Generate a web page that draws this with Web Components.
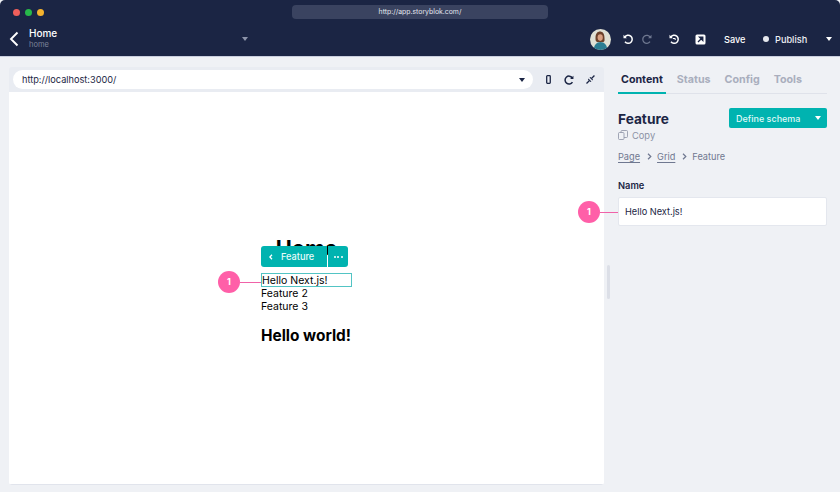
<!DOCTYPE html>
<html><head><meta charset="utf-8">
<style>
html,body{margin:0;padding:0;width:840px;height:492px;overflow:hidden;background:#eff1f5;font-family:Inter,"Liberation Sans",sans-serif}
sb-app{display:block;width:840px;height:492px}
</style></head><body>
<sb-app></sb-app>
<script>
function def(name,css,html){
  customElements.define(name,class extends HTMLElement{
    constructor(){super();const r=this.attachShadow({mode:'open'});r.innerHTML='<style>'+css+'</style>'+html;}
  });
}
def('sb-titlebar',`
:host{display:flex;align-items:center;height:24px;position:relative;padding-left:13px;box-sizing:border-box}
.d{width:7px;height:7px;border-radius:50%;margin-right:5px}
.u{position:absolute;left:292px;top:5px;width:256px;height:14px;border-radius:4px;background:#3a4360;color:#e3e6ee;font-size:6.900px;line-height:14px;text-align:center}
`,`<span class="d" style="background:#ee5f5b"></span><span class="d" style="background:#27b84a"></span><span class="d" style="background:#f5b32e"></span><div class="u">http://app.storyblok.com/</div>`);

def('sb-topbar',`
:host{display:flex;align-items:center;height:32px;color:#fff;box-sizing:border-box;padding-bottom:2px}
.back{margin-left:9px;width:10px;height:16px;display:block}
.t{margin-left:10px;width:210px}
.h{font-size:10px;line-height:13px;font-weight:500;margin-top:-1px}
.s{font-size:7.5px;line-height:10px;color:#7d849b}
.c{margin-left:3px;width:0;height:0;border-left:3.5px solid transparent;border-right:3.5px solid transparent;border-top:4px solid #8d94aa}
.sp{flex:1}
.av{width:21px;height:21px;display:block;margin-right:11px}
svg.i{display:block}
.save{font-size:9.2px;font-weight:500;margin-left:18px;width:21px;white-space:nowrap}
.dot{width:6px;height:6px;border-radius:50%;background:#e6e8ee;margin-left:18px}
.pub{font-size:9.2px;font-weight:500;margin-left:6px;color:#eef0f5;width:32px;white-space:nowrap}
.car{width:0;height:0;border-left:3.5px solid transparent;border-right:3.5px solid transparent;border-top:4px solid #fff;margin-left:19px;margin-right:8px}
`,`<svg class="back" viewBox="0 0 10 16"><path d="M8.5 1.5 2 8l6.5 6.5" fill="none" stroke="#fff" stroke-width="1.9"/></svg>
<div class="t"><div class="h">Home</div><div class="s">home</div></div>
<span class="c"></span><span class="sp"></span>
<svg class="av" viewBox="0 0 21 21"><defs><clipPath id="ac"><circle cx="10.5" cy="10.5" r="10.5"/></clipPath></defs><g clip-path="url(#ac)"><rect width="21" height="21" fill="#dfe0d4"/><path d="M5.500 9c0-4.500 2-6.500 4.500-6.500S14.500 4.500 14.500 9c0 2 .5 3-1 4H7c-1.500-1-1.500-2-1.500-4z" fill="#6b4029"/><ellipse cx="10.200" cy="8.600" rx="2.600" ry="3.300" fill="#d9a183"/><path d="M3.500 21c.5-5 3-8 7-8s6.500 3 7 8z" fill="#2b7d92"/></g></svg>
<svg class="i" width="12" height="12" viewBox="0 0 12 12"><path d="M2.800 4.200A4 4 0 1 1 3 8.700" fill="none" stroke="#fff" stroke-width="1.500"/><path d="M1.500 1.800v3.400h3.400z" fill="#fff"/></svg>
<svg class="i" style="margin-left:7px" width="12" height="12" viewBox="0 0 12 12"><path d="M9.200 4.200A4 4 0 1 0 9 8.700" fill="none" stroke="#6f7890" stroke-width="1.300"/><path d="M10.500 1.800v3.400H7.100z" fill="#6f7890"/></svg>
<svg class="i" style="margin-left:15px" width="12" height="12" viewBox="0 0 12 12"><path d="M2.800 4.200A4 4 0 1 1 3 8.700" fill="none" stroke="#fff" stroke-width="1.500"/><path d="M1.500 1.800v3.400h3.400z" fill="#fff"/><path d="M5 5.500h2.200v1.500" fill="none" stroke="#fff" stroke-width="1"/></svg>
<svg class="i" style="margin-left:15px" width="11" height="11" viewBox="0 0 11 11"><rect x=".5" y=".5" width="10" height="10" rx="1.500" fill="#fff"/><path d="M3 8l4-4M4.500 3.200h3.300v3.300z" stroke="#1b2544" stroke-width="1.300" fill="#1b2544"/></svg>
<span class="save">Save</span><span class="dot"></span><span class="pub">Publish</span><span class="car"></span>`);

def('sb-header',`:host{display:block;height:56px;background:#1b2544;border-bottom:1px solid #c9cede;border-radius:5px 5px 0 0}`,`<slot></slot>`);

def('sb-urlbar',`
:host{display:flex;align-items:center;height:25px;background:#e9ecf2;padding:0 9px 0 4px;box-sizing:border-box;flex:none}
.u{width:523px;height:19px;border-radius:10px;background:#fff;display:flex;align-items:center;padding:0 8px 0 9px;box-sizing:border-box;font-size:9.2px;color:#1b2544;justify-content:space-between}
.car{width:0;height:0;border-left:3.500px solid transparent;border-right:3.500px solid transparent;border-top:4px solid #1b2544}
svg{display:block}
`,`<div class="u"><span>http://localhost:3000/</span><span class="car"></span></div>
<svg style="margin-left:13px" width="5" height="9" viewBox="0 0 5 9"><rect x=".7" y=".7" width="3.600" height="7.600" rx=".7" fill="none" stroke="#1b2544" stroke-width="1.300"/></svg>
<svg style="margin-left:13px" width="10" height="10" viewBox="0 0 10 10"><path d="M8.300 2.700A4 4 0 1 0 8.500 7.200" fill="none" stroke="#1b2544" stroke-width="1.500"/><path d="M9.500 .6v3.400H6.100z" fill="#1b2544"/></svg>
<svg style="margin-left:12px" width="9" height="9" viewBox="0 0 9 9"><path d="M.5 8.500 3.500 5.500M8.500 .5l-3 3" stroke="#1b2544" stroke-width="1.300"/><path d="M2.500 3.500l3 3-1 .5-2.500-2.500zM3.500 2.500h0l3 3 .5-1L4.500 2z" fill="#1b2544"/></svg>`);

def('sb-badge',`
:host{position:absolute;display:flex;align-items:center}
.b{width:22px;height:22px;border-radius:50%;background:#ff5fa8;color:#fff;font-size:9px;font-weight:700;text-align:center;line-height:22px;flex:none}
.l{height:1px;background:#f062a8;flex:none;width:var(--len,20px)}
`,`<div class="b">1</div><div class="l"></div>`);

def('sb-toolbar',`
:host{position:absolute;left:0;top:-27px;display:flex;height:21px;color:#fff}
.a{display:flex;align-items:center;background:#00b3b0;width:66px;border-radius:3px 0 0 3px;box-sizing:border-box;padding-left:8px;font-size:9.2px;font-weight:500;color:#e8fbfa}
.a svg{margin-right:8px;display:block}
.b{display:flex;align-items:center;justify-content:center;gap:1.500px;background:#00b3b0;width:20px;margin-left:1px;border-radius:0 3px 3px 0}
.b s{width:2px;height:2px;border-radius:50%;background:#fff}
`,`<div class="a"><svg width="4" height="6" viewBox="0 0 4 6"><path d="M3 .8.9 3 3 5.200" fill="none" stroke="#fff" stroke-width="1.300"/></svg>Feature</div><div class="b"><s></s><s></s><s></s></div>`);

def('sb-preview',`
:host{display:block;flex:1;background:#fff;position:relative;overflow:hidden;box-shadow:inset 0 -1px 0 #e1e4ec}
.col{position:absolute;left:252px;top:143px;width:91px;color:#000}
h1{font-size:21.500px;line-height:26px;margin:0;font-weight:700;text-align:center;white-space:nowrap}
.w{position:relative;margin-top:12px}
.row{font-size:10.500px;line-height:13px;white-space:nowrap;color:#000}
.sel{border:1px solid #52c4c4;height:14px;box-sizing:border-box;margin:0}
h2{font-size:15.400px;line-height:20px;margin:13px 0 0;font-weight:700;white-space:nowrap}
sb-badge{left:-43px;top:-2px;--len:21px}
`,`<div class="col"><h1>Home</h1><div class="w"><sb-toolbar></sb-toolbar><sb-badge></sb-badge>
<div class="row sel">Hello Next.js!</div><div class="row">Feature 2</div><div class="row">Feature 3</div></div><h2>Hello world!</h2></div>`);

def('sb-card',`:host{display:flex;flex-direction:column;width:595px;height:418px;border-radius:3px;overflow:hidden;margin:10px 0 0 9px;flex:none}`,`<slot></slot>`);

def('sb-tabs',`
:host{display:flex;height:22px;border-bottom:1px solid #dfe2ea;font-size:10.700px;font-weight:700;color:#a9aebd;box-sizing:border-box;width:209px;margin-top:15px;padding-left:3px;gap:14px}
.t{height:22px;box-sizing:border-box;line-height:15px;white-space:nowrap}
.on{color:#1b2544;position:relative}
.on::after{content:"";position:absolute;left:-3px;right:-3px;bottom:0;height:2px;background:#00b3b0}
`,`<div class="t on">Content</div><div class="t">Status</div><div class="t">Config</div><div class="t">Tools</div>`);

def('sb-panel',`
:host{display:block;width:209px;margin-left:14px;flex:none;color:#1b2544;position:relative}
.head{display:flex;justify-content:space-between;margin-top:14px;height:20px}
.ti{font-size:13.700px;font-weight:700;line-height:22px}
.btn{display:flex;height:20px;background:#00b3b0;border-radius:2px;width:98px;color:#dff8f6;font-size:9px;font-weight:500;align-items:center;box-sizing:border-box;padding-left:7px;position:relative}
.btn i{position:absolute;right:6px;top:8px;border-left:3.500px solid transparent;border-right:3.500px solid transparent;border-top:4px solid #fff}
.copy{display:flex;align-items:center;gap:4px;font-size:9.300px;color:#8c92a5;margin-top:0;height:14px}
.crumb{display:flex;align-items:center;font-size:9.200px;color:#6f7890;margin-top:7px;height:14px}
.crumb u{text-underline-offset:2px}
.crumb b{width:6px;margin:0 5px 0 6px;display:flex;justify-content:center}
label{display:block;font-size:9.300px;font-weight:600;margin-top:16px;line-height:14px}
.inp{background:#fff;height:29px;border:1px solid #e4e7ee;border-radius:2px;box-sizing:border-box;margin-top:4px;font-size:9.200px;line-height:27px;padding-left:6px;color:#1b2544}
sb-badge{left:-40px;top:4px;--len:18px}
.fld{position:relative}
`,`<sb-tabs></sb-tabs>
<div class="head"><div class="ti">Feature</div><div class="btn">Define schema<i></i></div></div>
<div class="copy"><svg width="10" height="10" viewBox="0 0 10 10"><rect x=".5" y="2.500" width="5.500" height="7" rx="1" fill="none" stroke="#8c92a5" stroke-width=".8"/><path d="M3 2.500V1.500a1 1 0 0 1 1-1h4.500a1 1 0 0 1 1 1v5a1 1 0 0 1-1 1H6" fill="none" stroke="#8c92a5" stroke-width=".8"/></svg>Copy</div>
<div class="crumb"><u>Page</u><b><svg width="5" height="7" viewBox="0 0 5 7"><path d="M1 .8 3.800 3.500 1 6.200" fill="none" stroke="#6f7890" stroke-width="1.200"/></svg></b><u>Grid</u><b><svg width="5" height="7" viewBox="0 0 5 7"><path d="M1 .8 3.800 3.500 1 6.200" fill="none" stroke="#6f7890" stroke-width="1.200"/></svg></b><span>Feature</span></div>
<label>Name</label>
<div class="fld"><sb-badge></sb-badge><div class="inp">Hello Next.js!</div></div>`);

def('sb-app',`
:host{display:block;width:840px;height:492px;background:#eff1f5;position:relative}
.main{display:flex}
.grip{position:absolute;left:607px;top:265px;width:3px;height:34px;border-radius:2px;background:#dcdfe7}
`,`<sb-header><sb-titlebar></sb-titlebar><sb-topbar></sb-topbar></sb-header>
<div class="main"><sb-card><sb-urlbar></sb-urlbar><sb-preview></sb-preview></sb-card><sb-panel></sb-panel></div><div class="grip"></div>`);
</script></body></html>
